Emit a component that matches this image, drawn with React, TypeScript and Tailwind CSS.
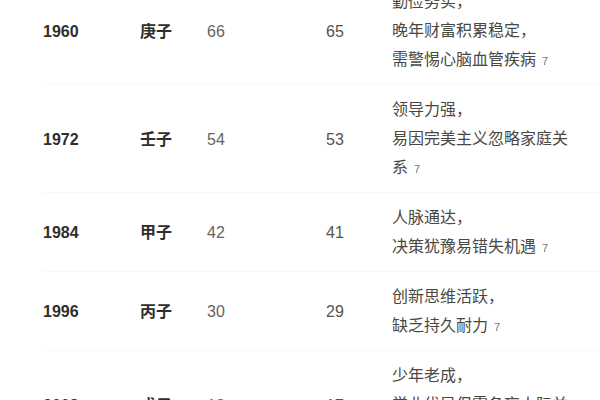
const rows = [
  {
    year: "1960",
    ganzhi: "庚子",
    age: "66",
    nominal: "65",
    lines: ["勤俭务实，", "晚年财富积累稳定，", "需警惕心脑血管疾病"],
  },
  {
    year: "1972",
    ganzhi: "壬子",
    age: "54",
    nominal: "53",
    lines: ["领导力强，", "易因完美主义忽略家庭关", "系"],
  },
  {
    year: "1984",
    ganzhi: "甲子",
    age: "42",
    nominal: "41",
    lines: ["人脉通达，", "决策犹豫易错失机遇"],
  },
  {
    year: "1996",
    ganzhi: "丙子",
    age: "30",
    nominal: "29",
    lines: ["创新思维活跃，", "缺乏持久耐力"],
  },
  {
    year: "2008",
    ganzhi: "戊子",
    age: "18",
    nominal: "17",
    lines: ["少年老成，", "学业优异但需备忘人际关系"],
  },
];

export default function App() {
  return (
    <div className="w-[600px] h-[400px] overflow-hidden bg-white font-['Liberation_Sans','Noto_Sans_CJK_SC',sans-serif] text-[16px]">
      <div className="-mt-[23px] pl-[43px]">
        {rows.map((row) => (
          <div
            key={row.year}
            className="grid grid-cols-[97px_67px_119px_66px_180px] items-center pt-[10px] pb-[8px] border-b border-[#faf8f0]"
          >
            <div className="font-bold text-[#2e2e2a]">{row.year}</div>
            <div className="font-bold text-[#2e2e2a]">{row.ganzhi}</div>
            <div className="text-[#66645e]">{row.age}</div>
            <div className="text-[#55534c]">{row.nominal}</div>
            <div className="leading-[29px] text-[#4a4843]">
              {row.lines.map((line, i) => (
                <div key={i}>
                  {line}
                  {i === row.lines.length - 1 && (
                    <span className="ml-[6px] text-[11px] text-[#77756e]">7</span>
                  )}
                </div>
              ))}
            </div>
          </div>
        ))}
      </div>
    </div>
  );
}
